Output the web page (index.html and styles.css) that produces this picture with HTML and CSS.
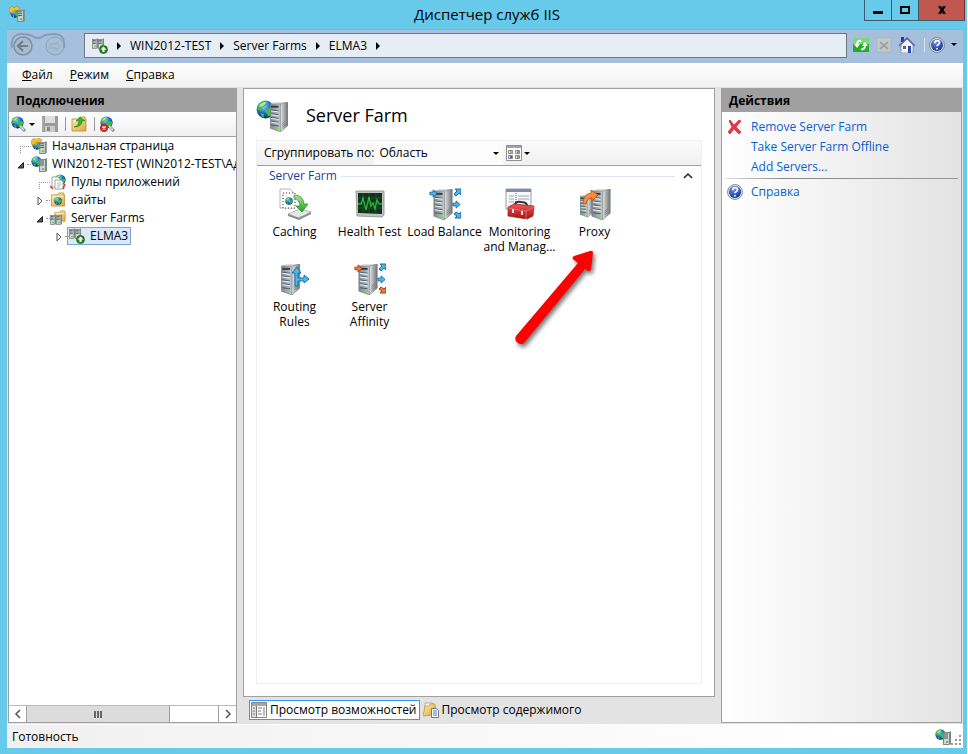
FILE: index.html
```html
<!DOCTYPE html>
<html lang="ru">
<head>
<meta charset="utf-8">
<title>Диспетчер служб IIS</title>
<link rel="stylesheet" href="styles.css">
</head>
<body>
<svg class="sprite" aria-hidden="true">
  <defs>
    <linearGradient id="g-side"><stop offset="0" stop-color="#e2e4e5"/><stop offset="1" stop-color="#6f7375"/></linearGradient>
    <linearGradient id="g-front"><stop offset="0" stop-color="#7f8890"/><stop offset="1" stop-color="#c0c7cd"/></linearGradient>
    <radialGradient id="g-globe" cx=".38" cy=".3" r=".75"><stop offset="0" stop-color="#9fdcff"/><stop offset=".45" stop-color="#2478d8"/><stop offset="1" stop-color="#06236e"/></radialGradient>
    <radialGradient id="g-help" cx=".4" cy=".25" r=".8"><stop offset="0" stop-color="#6f95e8"/><stop offset="1" stop-color="#102f94"/></radialGradient>
    <linearGradient id="g-folder" x2="1" y2="1"><stop offset="0" stop-color="#fdeeb0"/><stop offset="1" stop-color="#dda83c"/></linearGradient>
    <linearGradient id="g-red" x2="0" y2="1"><stop offset="0" stop-color="#ee5a5a"/><stop offset="1" stop-color="#a80f12"/></linearGradient>
    <linearGradient id="g-green" x2="0" y2="1"><stop offset="0" stop-color="#a9ec94"/><stop offset="1" stop-color="#1fa01f"/></linearGradient>
  </defs>
  <symbol id="globe" viewBox="0 0 16 16">
    <circle cx="8" cy="8" r="7.5" fill="url(#g-globe)"/>
    <path d="M3 3q4-3 6-1l-1 3-3 1-1 3-3-1q0-3 2-5zM8 8l4-2 3 1q0 4-3 6l-2 1-1-3-2-1zM4 11l3 1-1 3q-2-1-2-4z" fill="#42bd3c"/>
    <path d="M3 4q3-3 6-2l-3 3-3 1z" fill="#c7f5b5" opacity=".8"/>
  </symbol>
  <symbol id="tower" viewBox="0 0 20 32">
    <path d="M0 2 5 0h14L11 2z" fill="#dfe2e4"/>
    <path d="M11 2l8-2v25l-8 7z" fill="url(#g-side)"/>
    <path d="M0 2h11v30L0 28z" fill="url(#g-front)"/>
    <path d="M1 4h8v2H1z" fill="#333a40"/>
    <path d="M1 8l8 1v1L1 9zm0 4l8 1v1l-8-1zm0 4l8 1v1l-8-1zm0 4l8 1v1l-8-1zm0 4l8 1v1l-8-1z" fill="#475a68"/>
    <path d="M1 9l8 1v1l-8-1zm0 4l8 1v1l-8-1zm0 4l8 1v1l-8-1zm0 4l8 1v1l-8-1z" fill="#f3f6f8"/>
    <path d="M6 27l3 1v2l-3-1z" fill="#62e816"/>
    <path d="M13 23l4-3m-4 5l4-3m-4 5l4-3" stroke="#777" stroke-width=".7"/>
    <path d="M0 2h11v30L0 28zM11 2l8-2v25l-8 7" fill="none" stroke="#70777c" stroke-width=".6"/>
  </symbol>
  <symbol id="rack" viewBox="0 0 8 14">
    <path d="M0 1h6l2-1v13l-2 1H0z" fill="#7e8386"/>
    <path d="M1 2h5v11H1z" fill="#cfd4d6"/>
    <path d="M1 3h4m-4 2h4m-4 2h4" stroke="#4a5258"/>
    <path d="M3 10h2v2H3z" fill="#4fd31c"/>
  </symbol>
  <symbol id="arrow" viewBox="0 0 10 10"><path d="M1 3.500h3.500V1L9 5 4.500 9V6.500H1z" stroke-width="1"/></symbol>
  <symbol id="server-globe" viewBox="0 0 16 16"><use href="#globe" width="11" height="11"/><use href="#rack" x="8" y="2" width="8" height="14"/></symbol>
  <symbol id="start" viewBox="0 0 16 16"><use href="#globe" x="1" y="2" width="10" height="10"/><path d="M0 3l3-3 2 2 3-2 3 2-2 3-3-1-3 3-3-1z" fill="#f5bd2f" stroke="#b87908" stroke-width=".5"/><use href="#rack" x="8" y="3" width="8" height="13"/></symbol>
  <symbol id="plug" viewBox="0 0 16 16"><path d="M9 10l5 5" stroke="#7c8b97" stroke-width="3"/><use href="#globe" width="13" height="13"/><path d="M9 10l4 4" stroke="#c5d1da" stroke-width="2"/></symbol>
  <symbol id="farm-up" viewBox="0 0 16 16"><use href="#rack" width="6" height="11"/><use href="#rack" x="6" width="6" height="11"/><circle cx="11.500" cy="11.500" r="4" fill="#27851f" stroke="#105e0c" stroke-width=".7"/><path d="M11.500 8.500l3 3h-2v2.500h-2v-2.500h-2z" fill="#fff"/></symbol>
  <symbol id="folder" viewBox="0 0 16 16"><path d="M1 3h7l1-2h5v2h1v12H1z" fill="url(#g-folder)" stroke="#b88d36" stroke-width=".8"/><path d="M2 5h12" stroke="#fff3c5"/></symbol>
  <symbol id="sites" viewBox="0 0 16 16"><use href="#folder" width="16" height="15"/><use href="#globe" x="4" y="5" width="8" height="8"/></symbol>
  <symbol id="farms" viewBox="0 0 16 16"><use href="#folder" x="4" width="12" height="12"/><use href="#rack" y="3" width="6" height="13"/><use href="#rack" x="6" y="3" width="6" height="13"/></symbol>
  <symbol id="pools" viewBox="0 0 16 16"><use href="#globe" x="4" width="12" height="12"/><path d="M2 3h6l2 2v8H2z" fill="#fff" stroke="#8b8f99" stroke-width=".8"/><path d="M5 6h6l2 2v7H5z" fill="#fff" stroke="#8b8f99" stroke-width=".8"/><path d="M7 9h4m-4 2h4m-4 2h3" stroke="#9aa3b5" stroke-width=".8"/><path d="M0 12l3 3M15 10l-2 5" stroke="#c93a34" stroke-width="1.500"/></symbol>
  <symbol id="help" viewBox="0 0 16 16"><circle cx="8" cy="8" r="7.500" fill="#d4d7dc" stroke="#777d88" stroke-width=".8"/><circle cx="8" cy="8" r="6" fill="url(#g-help)"/><path d="M5.700 6.200q0-2.500 2.500-2.500t2.300 2q0 1.300-1.500 2-.9.500-.9 1.600M8 11v1.600" fill="none" stroke="#fff" stroke-width="1.700"/></symbol>
</svg>

<div class="window">
  <header class="titlebar">
    <svg class="i16 app-icon"><use href="#start"/></svg>
    <h1>Диспетчер служб IIS</h1>
    <div class="caption">
      <button aria-label="Свернуть"><svg viewBox="0 0 12 10"><path d="M1 6h10v3H1z"/></svg></button>
      <button aria-label="Развернуть"><svg viewBox="0 0 12 10"><path d="M2 2h8v6H2z" fill="none" stroke="#000" stroke-width="2"/></svg></button>
      <button class="close" aria-label="Закрыть"><svg viewBox="0 0 12 10"><path d="M2 1h3l1 2 1-2h3L7.500 5 10 9H7L6 7 5 9H2l2.500-4z"/></svg></button>
    </div>
  </header>

  <div class="addressbar">
    <div class="travel">
      <svg class="travel-shape" viewBox="0 0 56 30" aria-hidden="true"><path d="M2 17Q0 3 12 3q8 0 12 3 4 2 8 0 4-3 12-3 12 0 10 14" fill="none" stroke="#819fbd" stroke-width="2"/></svg>
      <button aria-label="Назад"><svg viewBox="0 0 20 20"><circle cx="10" cy="10" r="9" fill="#a9bbcc" stroke="#7f909f" stroke-width="1.500"/><path d="M15 10H6m4-5l-5 5 5 5" fill="none" stroke="#6f7f8d" stroke-width="2.200"/></svg></button>
      <button aria-label="Вперед"><svg viewBox="0 0 20 20"><circle cx="10" cy="10" r="9" fill="#a9bed4" stroke="#8da3b9"/><path d="M5 8h6V6l4 4-4 4v-2H5z" fill="none" stroke="#97abc0"/></svg></button>
    </div>
    <nav class="crumbs" aria-label="Путь">
      <svg class="i16"><use href="#farm-up"/></svg><i></i>
      <a href="#">WIN2012-TEST</a><i></i>
      <a href="#">Server Farms</a><i></i>
      <a href="#">ELMA3</a><i></i>
    </nav>
    <div class="address-tools">
      <button aria-label="Обновить"><svg class="i16" viewBox="0 0 16 16"><path d="M0 1h16v14H0z" fill="#1fae25"/><path d="M0 1h16v6H0z" fill="#7fd87a"/><path d="M8 4q-4-1-4 4" fill="none" stroke="#fff" stroke-width="2"/><path d="M1 7h6l-3 4z" fill="#fff"/><path d="M8 12q4 1 4-4" fill="none" stroke="#fff" stroke-width="2"/><path d="M9 9h6l-3-4z" fill="#fff"/></svg></button>
      <button aria-label="Остановить"><svg class="i16" viewBox="0 0 16 16"><path d="M1 1h14v14H1z" fill="#c4c8cc" stroke="#afb7bf"/><path d="M4 5l8 7m0-7l-8 7" stroke="#9aa0a6" stroke-width="1.700"/></svg></button>
      <button aria-label="Домой"><svg class="i16" viewBox="0 0 16 16"><path d="M2 8l6-6 6 6v8H2z" fill="#f2f4fa" stroke="#8088a0" stroke-width=".8"/><path d="M2 0h3v5H2z" fill="#2438b5"/><path d="M0 9l8-8 8 8" fill="none" stroke="#5566a8" stroke-width="1.500"/><path d="M9 9h3v7H9z" fill="#244fa5"/><path d="M4 9h3v3H4z" fill="#666"/></svg></button>
      <span class="sep"></span>
      <button class="drop" aria-label="Справка"><svg class="i16"><use href="#help"/></svg></button>
    </div>
  </div>

  <nav class="menubar" aria-label="Меню">
    <button><u>Ф</u>айл</button><button><u>Р</u>ежим</button><button><u>С</u>правка</button>
  </nav>

  <main class="work">
    <section class="panel connections">
      <h2>Подключения</h2>
      <div class="toolbar">
        <button class="drop" aria-label="Подключиться"><svg class="i16"><use href="#plug"/></svg></button>
        <button aria-label="Сохранить"><svg class="i16" viewBox="0 0 16 16"><path d="M0 0h16v16H0z" fill="#9b9b9b"/><path d="M3 0h10v7H3z" fill="#dedede"/><path d="M3 10h10v6H3z" fill="#c9c9c9"/><path d="M5 11h3v4H5z" fill="#888"/><path d="M1 1v14" stroke="#bbb"/></svg></button>
        <span class="sep"></span>
        <button aria-label="Вверх"><svg class="i16" viewBox="0 0 16 16"><use href="#folder" width="16" height="16"/><path d="M3 11q5-1 5-6H5l4-4 5 4h-3q0 6-8 6z" fill="#35b52d" stroke="#237a1c" stroke-width=".6"/></svg></button>
        <span class="sep"></span>
        <button aria-label="Отключиться"><svg class="i16" viewBox="0 0 16 16"><use href="#plug" width="16" height="16"/><circle cx="4" cy="12" r="4" fill="#c62c28"/><path d="M2.500 10.500l3 3m0-3l-3 3" stroke="#fff" stroke-width="1.300"/></svg></button>
      </div>
      <ul class="tree">
        <li><div class="node"><span class="twig first"></span><svg class="i16"><use href="#start"/></svg><a href="#">Начальная страница</a></div></li>
        <li>
          <div class="node"><button class="toggle" aria-label="Свернуть узел"><svg viewBox="0 0 8 8"><path d="M1 7h5.500V1.500z" fill="#555" stroke="#222"/></svg></button><span class="twig"></span><svg class="i16"><use href="#server-globe"/></svg><a href="#">WIN2012-TEST (WIN2012-TEST\Ад</a></div>
          <ul>
            <li><div class="node"><span class="twig first"></span><svg class="i16"><use href="#pools"/></svg><a href="#">Пулы приложений</a></div></li>
            <li><div class="node"><button class="toggle" aria-label="Развернуть узел"><svg viewBox="0 0 8 8"><path d="M2 0l4 4-4 4z" fill="#fff" stroke="#555"/></svg></button><span class="twig"></span><svg class="i16"><use href="#sites"/></svg><a href="#">сайты</a></div></li>
            <li>
              <div class="node"><button class="toggle" aria-label="Свернуть узел"><svg viewBox="0 0 8 8"><path d="M1 7h5.500V1.500z" fill="#555" stroke="#222"/></svg></button><span class="twig"></span><svg class="i16"><use href="#farms"/></svg><a href="#">Server Farms</a></div>
              <ul>
                <li><div class="node"><button class="toggle" aria-label="Развернуть узел"><svg viewBox="0 0 8 8"><path d="M2 0l4 4-4 4z" fill="#fff" stroke="#555"/></svg></button><span class="twig"></span><span class="picked"><svg class="i16"><use href="#farm-up"/></svg><a href="#">ELMA3</a></span></div></li>
              </ul>
            </li>
          </ul>
        </li>
      </ul>
      <div class="scroll">
        <button aria-label="Прокрутить влево"><svg viewBox="0 0 8 10"><path d="M6 1L2 5l4 4" fill="none" stroke="#555" stroke-width="1.500"/></svg></button>
        <div class="track"><div class="thumb"><svg viewBox="0 0 9 7"><path d="M0 0h2v7H0zm3 0h2v7H3zm3 0h2v7H6z" fill="#666"/></svg></div></div>
        <button aria-label="Прокрутить вправо"><svg viewBox="0 0 8 10"><path d="M2 1l4 4-4 4" fill="none" stroke="#555" stroke-width="1.500"/></svg></button>
      </div>
    </section>

    <section class="center">
      <div class="page">
        <header class="page-title">
          <svg class="i32" viewBox="0 0 32 32"><use href="#globe" width="19" height="19"/><use href="#tower" x="14" y="2" width="19" height="30"/></svg>
          <h2>Server Farm</h2>
        </header>
        <div class="features">
          <div class="groupbar">
            <label for="group">Сгруппировать по:</label>
            <span class="combo"><select id="group"><option>Область</option></select></span>
            <button class="drop" aria-label="Вид"><svg class="i16" viewBox="0 0 16 16"><path d="M.5.5h15v15H.5z" fill="#fff" stroke="#8c9096"/><path d="M1 1h14v2H1z" fill="#9aa5b5"/><path d="M2.500 5.500h4v3h-4zm7 0h4v3h-4zm-7 5h4v3h-4zm7 0h4v3h-4z" fill="#dfe8ee" stroke="#858b93"/><path d="M4 6h2v2H4z" fill="#c4b62e"/><path d="M11 6h2v2h-2z" fill="#58a7c5"/><path d="M4 11h2v2H4z" fill="#436bc8"/><path d="M11 11h2v2h-2z" fill="#e58137"/></svg></button>
          </div>
          <div class="group-head"><h3>Server Farm</h3><hr><button aria-label="Свернуть группу"><svg viewBox="0 0 10 8"><path d="M1 6l4-4 4 4" fill="none" stroke="#222" stroke-width="1.500"/></svg></button></div>
          <div class="tiles">
            <a class="tile" href="#"><svg class="i32" viewBox="0 0 32 32"><path d="M1 1h10l4 4v15H1z" fill="#fff" stroke="#b6b6b6"/><path d="M4 5h12v15H4z" fill="#fff" stroke="#333" stroke-dasharray="1 2"/><use href="#globe" x="6" y="9" width="8" height="8"/><path d="M9 26l12-5 11 3-12 6z" fill="#e6e9ea" stroke="#9a9fa2" stroke-width=".7"/><path d="M9 26l11 4 12-6v2l-12 6-11-4z" fill="#858b90"/><path d="M20 29l3-1v2l-3 1z" fill="#56d91c"/><path d="M15 7q9 0 10 9h4l-6 8-6-6h4q0-6-6-8z" fill="url(#g-green)" stroke="#21861d" stroke-width=".7"/></svg><span>Caching</span></a>
            <a class="tile" href="#"><svg class="i32" viewBox="0 0 32 32"><path d="M2 3h28v24l-2 2L3 28z" fill="#bfc3c2" stroke="#878b8a" stroke-width=".8"/><path d="M4 5h24v21L4 25z" fill="#12301a"/><path d="M4 10h24M4 15h24M4 20h24M9 5v20m6-20v20m7-20v20" stroke="#1f5c29" stroke-width=".8"/><path d="M4 16h3l2-6 3 12 3-13 2 9 2-3 2 6 2-9 2 4h3" fill="none" stroke="#2cb53a" stroke-width="1.300"/></svg><span>Health Test</span></a>
            <a class="tile" href="#"><svg class="i32" viewBox="0 0 32 32"><use href="#tower" x="4" y="1" width="21" height="31"/><g fill="#4bb6f3" stroke="#146ba9"><use href="#arrow" width="9" height="9" y="1"/><use href="#arrow" x="23" y="12" width="9" height="9"/><path d="M26 1h6v6l-2-2-3 3-2-2 3-3zM25 26l2-2 3 2 2-2v6h-6l2-2z"/></g></svg><span>Load Balance</span></a>
            <a class="tile" href="#"><svg class="i32" viewBox="0 0 32 32"><path d="M2 1h25v20H2z" fill="#f5f7f9" stroke="#969fa9"/><path d="M2 1h25v3H2z" fill="#7b8da7"/><path d="M5 8h5m-5 3h5m-5 3h5m4-6h11m-11 3h11" stroke="#9baab9"/><path d="M12 5v15" stroke="#555" stroke-dasharray="1 1"/><path d="M11 17q0-4 6-3 6 0 6 4" fill="none" stroke="#333" stroke-width="2"/><path d="M4 19l6-3 20 2-1 10-6 3-19-3z" fill="url(#g-red)" stroke="#98191b" stroke-width=".7"/><path d="M4 20l18 3 8-4M22 23v8" fill="none" stroke="#e06c6c"/><path d="M8 21h2v4H8zm9 2h2v4h-2z" fill="#ddd"/></svg><span>Monitoring and Manag...</span></a>
            <div class="marked">
              <a class="tile" href="#"><svg class="i32" viewBox="0 0 32 32"><use href="#tower" x="1" y="6" width="14" height="24"/><use href="#tower" x="12" y="1" width="21" height="31"/><path d="M4 16q0-10 8-11V2l7 5-6 6V10q-5 0-6 6z" fill="#f78c3c" stroke="#b64f0c" stroke-width=".8"/></svg><span>Proxy</span></a>
              <svg class="pointer" viewBox="0 0 90 104" aria-hidden="true"><path d="M81 6Q81 3 78 4L62 9q-3 2 0 4l4 3L4 89a5.500 5.500 0 0 0 8 7L73 22l3 2q2 1 3-2z" fill="#fe0000"/></svg>
            </div>
            <a class="tile" href="#"><svg class="i32" viewBox="0 0 32 32"><use href="#tower" x="2" y="1" width="20" height="31"/><path d="M16 23V10h-3l5-6 4 6h-3v5h6v-3l5 4-5 4v-2h-6v5z" fill="#51b6ed" stroke="#1373ad"/></svg><span>Routing Rules</span></a>
            <a class="tile" href="#"><svg class="i32" viewBox="0 0 32 32"><use href="#tower" x="4" y="1" width="21" height="31"/><g fill="#4bb6f3" stroke="#146ba9"><use href="#arrow" x="23" y="12" width="9" height="9"/><path d="M26 1h6v6l-2-2-3 3-2-2 3-3z"/></g><g fill="#f3793c" stroke="#a5400d"><use href="#arrow" width="9" height="9" y="1"/><path d="M25 26l2-2 3 2 2-2v6h-6l2-2z"/></g></svg><span>Server Affinity</span></a>
          </div>
        </div>
      </div>
      <div class="tabs">
        <button class="active"><svg class="i16" viewBox="0 0 16 16"><path d="M.5.5h15v15H.5z" fill="#fff" stroke="#858585"/><path d="M1 1h14v3H1z" fill="#a6a6a6"/><path d="M1 4h4v11H1z" fill="#ddd"/><path d="M5.500 4v11M2 6h2M2 9h2m-2 3h2M7 6h4M7 9h3m-3 3h4m2-7v9" stroke="#777"/></svg>Просмотр возможностей</button>
        <button><svg class="i16" viewBox="0 0 16 16"><path d="M2 1h7l3 3v8H2z" fill="#fff" stroke="#aaa"/><path d="M0 14L2 4h4l1-2h5v11z" fill="url(#g-folder)" stroke="#b88d36" stroke-width=".7"/><path d="M8.500 6.500h5l2 2v7h-7z" fill="#fff" stroke="#777"/><path d="M10 9h4m-4 2h4m-4 2h4" stroke="#4179c6"/></svg>Просмотр содержимого</button>
      </div>
    </section>

    <section class="panel actions">
      <h2>Действия</h2>
      <ul>
        <li><svg class="i16" viewBox="0 0 16 16"><path d="M2 2l1-1 4 5 5-5 2 1-5 6 5 5-2 2-5-5-4 5-2-2 4-5z" fill="#e83a3d" stroke="#b91c22" stroke-width=".6"/></svg><a href="#">Remove Server Farm</a></li>
        <li><a href="#">Take Server Farm Offline</a></li>
        <li><a href="#">Add Servers...</a></li>
      </ul>
      <hr>
      <ul>
        <li><svg class="i16"><use href="#help"/></svg><a href="#">Справка</a></li>
      </ul>
    </section>
  </main>

  <footer class="status">
    <span>Готовность</span>
    <svg class="i16"><use href="#server-globe"/></svg>
    <svg class="grip" viewBox="0 0 10 10"><path d="M8 0h2v2H8zM4 4h2v2H4zm4 0h2v2H8zM0 8h2v2H0zm4 0h2v2H4zm4 0h2v2H8z" fill="#999"/></svg>
  </footer>
</div>
</body>
</html>
```
FILE: styles.css
```css
* { box-sizing: border-box; }
body { margin: 0; background: #fff; color: #000; font: 12px/18px "Open Sans", "Noto Sans", sans-serif; }
h1, h2, h3, ul { margin: 0; padding: 0; font-weight: 400; list-style: none; }
a { color: inherit; text-decoration: none; }
button { display: flex; align-items: center; justify-content: center; margin: 0; padding: 0; border: 0; background: none; color: inherit; font: inherit; }
svg { display: block; flex: none; }
.sprite { position: absolute; width: 0; height: 0; }
.i16 { width: 16px; height: 16px; }
.i32 { width: 32px; height: 32px; }
.sep { width: 1px; height: 14px; background: #999; }
.drop::after { content: ""; margin-left: 2px; border: 3px solid transparent; border-top-color: #000; border-bottom: 0; }

.window { display: flex; flex-direction: column; min-height: 100vh; margin-right: 1px; padding: 0 4px 6px 7px; background: #67caeb; }

.titlebar { display: grid; grid-template-columns: 104px 1fr 102px; height: 29px; margin-right: -2px; }
.app-icon { margin: 6px 0 0 2px; }
.titlebar h1 { font-size: 15px; line-height: 29px; text-align: center; }
.caption { display: flex; justify-content: flex-end; height: 21px; }
.caption button { width: 27px; border: 1px solid #3b5b6b; border-top: 0; border-right: 0; }
.caption svg { width: 12px; height: 10px; }
.caption .close { width: 47px; border-right: 1px solid #7a2f2b; background: #c1584f; }

.addressbar { display: flex; align-items: center; height: 34px; padding: 0 6px 2px 0; border-top: 1px solid #8fafcb; background: #a5bfdc; }
.travel { display: flex; position: relative; gap: 12px; width: 77px; padding: 0 0 0 6px; }
.travel button svg { width: 20px; height: 20px; }
.travel-shape { position: absolute; left: 3px; top: -5px; width: 56px; height: 30px; }
.crumbs { display: flex; flex: 1; align-items: center; height: 25px; padding-left: 7px; border: 1px solid #6a7886; background: #e7edf5; }
.crumbs i { margin: 0 9px; border: 4px solid transparent; border-left-color: #000; border-right: 0; }
.address-tools { display: flex; align-items: center; gap: 7px; padding: 0 0 2px 6px; }
.address-tools .sep { margin: 0 -3px 0 2px; background: #dbe5ef; }
.address-tools .drop::after { margin-left: 6px; }

.menubar { display: flex; gap: 17px; height: 24px; padding-left: 15px; background: linear-gradient(#fff, #f0f0f0); }

.work { display: grid; flex: 1; grid-template-columns: 229px 1fr 241px; gap: 6px; padding: 1px; background: #e3e3e3; }
.panel { display: flex; flex-direction: column; min-width: 0; border: 1px solid #a0a0a0; background: #fff; }
.panel h2 { height: 23px; padding-left: 7px; background: #a0a0a0; font-size: 12px; line-height: 23px; font-weight: 700; }

.toolbar { display: flex; align-items: center; gap: 7px; height: 25px; padding-left: 2px; border-bottom: 1px solid #a0a0a0; background: linear-gradient(#fefefe, #f0f0f0); }
.toolbar .sep { margin-right: -2px; }
.tree { flex: 1; overflow: hidden; }
.tree ul { margin-left: 19px; }
.node { display: flex; align-items: center; height: 18px; padding-left: 22px; position: relative; white-space: nowrap; }
.node a { margin-left: 5px; }
.toggle { position: absolute; left: 8px; top: 6px; }
.toggle svg { width: 8px; height: 8px; }
.twig { position: absolute; left: 18px; top: 9px; width: 4px; border-top: 1px dotted #999; }
.twig.first { left: 11px; width: 11px; height: 7px; border-left: 1px dotted #999; }
.picked { display: flex; align-items: center; height: 18px; margin-left: -2px; padding: 0 2px 0 1px; border: 1px solid #7da2ce; background: #d9e9fb; }
.scroll { display: grid; grid-template-columns: 17px 1fr 17px; height: 17px; border-top: 1px solid #bbb; }
.scroll button svg { width: 8px; height: 10px; }
.track { display: flex; border: solid #a0a0a0; border-width: 0 1px; }
.thumb { display: flex; align-items: center; justify-content: center; width: 75%; border-right: 1px solid #a0a0a0; background: #dcdcdc; }
.thumb svg { width: 9px; height: 7px; }

.center { display: flex; flex-direction: column; min-width: 0; }
.page { display: flex; flex: 1; flex-direction: column; padding: 0 12px 12px; border: 1px solid #a0a0a0; background: #fff; }
.page-title { display: flex; align-items: center; gap: 18px; height: 51px; }
.page-title .i32 { margin-top: 2px; }
.page-title h2 { font-size: 18px; line-height: 24px; }
.features { flex: 1; border: 1px solid #f0f0f0; }
.groupbar { display: flex; align-items: center; height: 25px; padding-left: 7px; border-bottom: 1px solid #a0a0a0; background: linear-gradient(#fbfbfb, #f0f0f0); }
.combo { position: relative; width: 129px; height: 24px; margin-right: 3px; background: #fcfcfc; }
.combo::after { content: ""; position: absolute; right: 4px; top: 11px; border: 3px solid transparent; border-top-color: #000; border-bottom: 0; }
.combo select { width: 100%; height: 24px; padding: 0 5px; border: 0; background: none; color: #000; font: inherit; appearance: none; }
.group-head { display: flex; align-items: center; height: 20px; padding: 0 8px 0 12px; }
.group-head h3 { color: #1e3f9c; font-size: 12px; }
.group-head hr { flex: 1; height: 1px; margin: 0 8px 0 4px; border: 0; background: #dce6f4; }
.group-head svg { width: 10px; height: 8px; }
.tiles { display: grid; grid-template-columns: repeat(auto-fill, 75px); grid-auto-rows: 75px; padding-top: 2px; }
.tile { display: flex; flex-direction: column; align-items: center; gap: 4px; line-height: 15px; text-align: center; }
.marked { position: relative; }
.pointer { position: absolute; left: -45px; top: 59px; width: 90px; height: 104px; filter: drop-shadow(2px 3px 2px #0008); }

.tabs { display: flex; align-items: center; gap: 1px; height: 26px; padding-left: 6px; }
.tabs button { gap: 3px; height: 20px; padding: 0 2px 0 1px; border: 1px solid transparent; white-space: nowrap; }
.tabs .active { border-color: #3399ff; background: #fff; }

.actions { background: linear-gradient(90deg, #fff, #e3e3e3); }
.actions ul { padding: 5px 5px 0; }
.actions li { display: grid; grid-template-columns: 16px 1fr; gap: 8px; align-items: center; height: 20px; color: #0a5fc9; }
.actions a { grid-column: 2; }
.actions hr { width: calc(100% - 6px); height: 1px; margin: 1px 3px 0; border: 0; background: linear-gradient(90deg, #e0e0e0, #888 25%, #999); }
.actions hr + ul { padding-top: 3px; }

.status { display: flex; align-items: center; height: 24px; padding: 0 2px 0 5px; border-top: 1px solid #fff; background: linear-gradient(90deg, #f0f0f0, #fff 90%); }
.status span { flex: 1; }
.grip { align-self: flex-end; width: 10px; height: 10px; margin-bottom: 3px; }
```
